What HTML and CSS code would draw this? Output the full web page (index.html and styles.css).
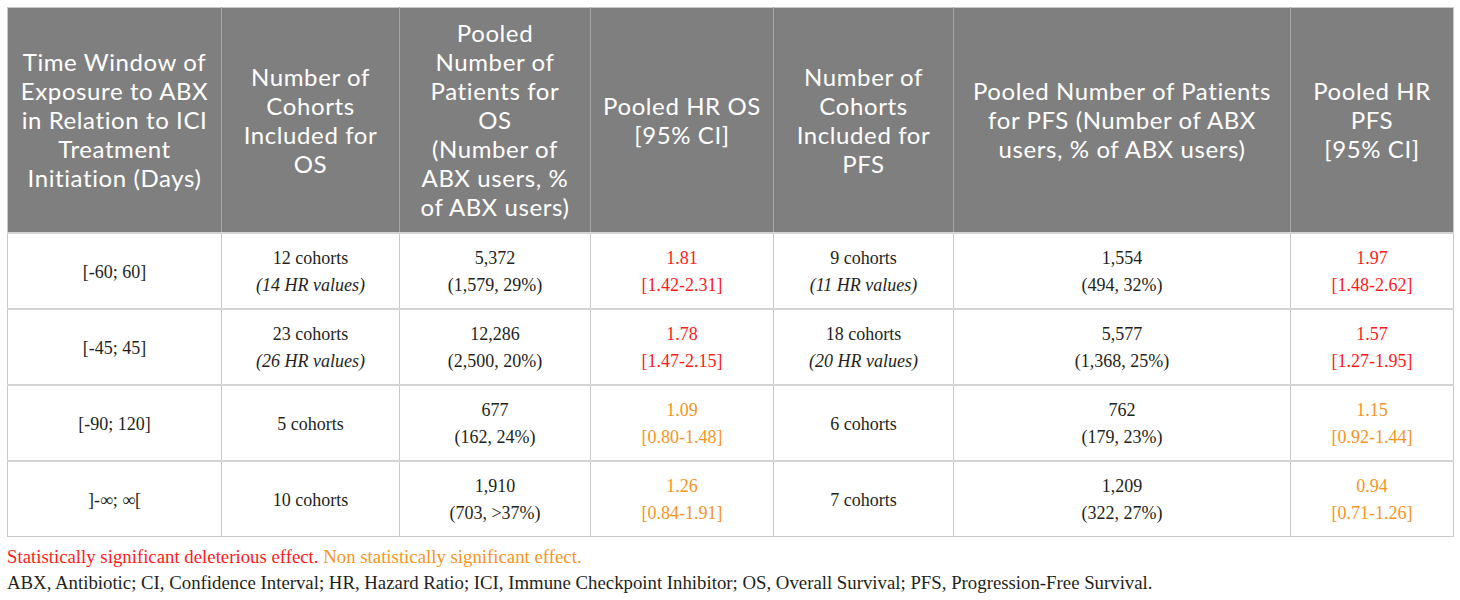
FILE: index.html
```html
<!DOCTYPE html>
<html lang="en">
<head>
<meta charset="UTF-8">
<title>ABX exposure and ICI outcomes</title>
<link rel="stylesheet" href="styles.css">
</head>
<body>
<div class="page">
  <table class="results">
    <colgroup>
      <col class="c1"><col class="c2"><col class="c3"><col class="c4">
      <col class="c5"><col class="c6"><col class="c7">
    </colgroup>
    <thead>
      <tr>
        <th>Time Window of<br>Exposure to ABX<br>in Relation to ICI<br>Treatment<br>Initiation (Days)</th>
        <th>Number of<br>Cohorts<br>Included for<br>OS</th>
        <th>Pooled<br>Number of<br>Patients for<br>OS<br>(Number of<br>ABX users, %<br>of ABX users)</th>
        <th>Pooled HR OS<br>[95% CI]</th>
        <th>Number of<br>Cohorts<br>Included for<br>PFS</th>
        <th>Pooled Number of Patients<br>for PFS (Number of ABX<br>users, % of ABX users)</th>
        <th>Pooled HR<br>PFS<br>[95% CI]</th>
      </tr>
    </thead>
    <tbody>
      <tr>
        <td>[-60; 60]</td>
        <td>12 cohorts<br><i>(14 HR values)</i></td>
        <td>5,372<br>(1,579, 29%)</td>
        <td class="sig">1.81<br>[1.42-2.31]</td>
        <td>9 cohorts<br><i>(11 HR values)</i></td>
        <td>1,554<br>(494, 32%)</td>
        <td class="sig">1.97<br>[1.48-2.62]</td>
      </tr>
      <tr>
        <td>[-45; 45]</td>
        <td>23 cohorts<br><i>(26 HR values)</i></td>
        <td>12,286<br>(2,500, 20%)</td>
        <td class="sig">1.78<br>[1.47-2.15]</td>
        <td>18 cohorts<br><i>(20 HR values)</i></td>
        <td>5,577<br>(1,368, 25%)</td>
        <td class="sig">1.57<br>[1.27-1.95]</td>
      </tr>
      <tr>
        <td>[-90; 120]</td>
        <td>5 cohorts</td>
        <td>677<br>(162, 24%)</td>
        <td class="ns">1.09<br>[0.80-1.48]</td>
        <td>6 cohorts</td>
        <td>762<br>(179, 23%)</td>
        <td class="ns">1.15<br>[0.92-1.44]</td>
      </tr>
      <tr>
        <td>]-&infin;; &infin;[</td>
        <td>10 cohorts</td>
        <td>1,910<br>(703, &gt;37%)</td>
        <td class="ns">1.26<br>[0.84-1.91]</td>
        <td>7 cohorts</td>
        <td>1,209<br>(322, 27%)</td>
        <td class="ns">0.94<br>[0.71-1.26]</td>
      </tr>
    </tbody>
  </table>
  <p class="legend"><span class="sig">Statistically significant deleterious effect.</span> <span class="ns">Non statistically significant effect.</span></p>
  <p class="abbr">ABX, Antibiotic; CI, Confidence Interval; HR, Hazard Ratio; ICI, Immune Checkpoint Inhibitor; OS, Overall Survival; PFS, Progression-Free Survival.</p>
</div>
</body>
</html>
```

FILE: styles.css
```css
body {
margin: 0;
background: #fff;
font-family: "Liberation Serif", serif;
color: #231f20;
}

.page {
padding: 7px;
}

.results {
border-collapse: collapse;
table-layout: fixed;
width: 1446px;
border: 1px solid #c8c8c8;
}

.results .c1 { width: 214px; }
.results .c2 { width: 178px; }
.results .c3 { width: 191px; }
.results .c4 { width: 183px; }
.results .c5 { width: 180px; }
.results .c6 { width: 337px; }
.results .c7 { width: 163px; }

.results th {
background: #7f7f7f;
color: #fff;
font-family: Lato, "Open Sans", sans-serif;
font-weight: normal;
font-size: 24px;
letter-spacing: 0.6px;
line-height: 29px;
height: 225px;
padding: 0 6px;
text-align: center;
vertical-align: middle;
border-left: 1px solid #a6a6a6;
box-sizing: border-box;
}

.results th:first-child {
border-left: none;
}

.results td {
height: 71px;
padding: 3px 8px 0;
font-size: 18px;
line-height: 27px;
text-align: center;
vertical-align: middle;
border-left: 1px solid #c8c8c8;
border-top: 2px solid #d4d4d4;
}

.results td i {
font-style: italic;
}

.sig {
color: #ff1a1a;
}

.ns {
color: #f7941d;
}

.legend,
.abbr {
margin: 0;
font-size: 18.8px;
line-height: 26px;
}

.legend {
margin-top: 7px;
}
```
